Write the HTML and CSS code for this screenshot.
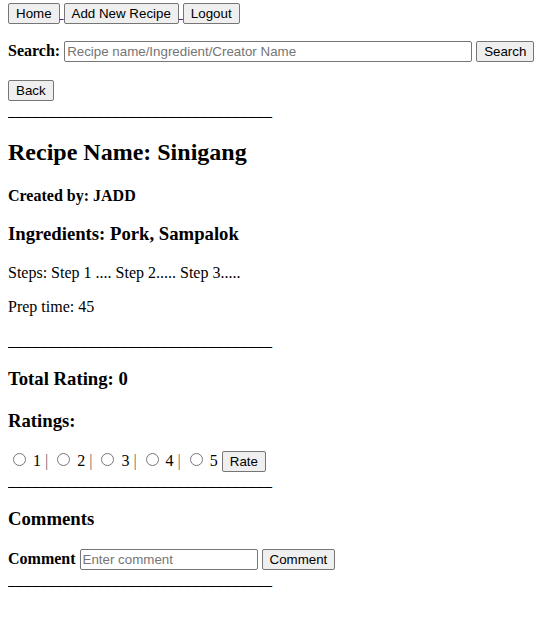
FILE: index.html
```html
<!DOCTYPE html>
<html>
<head>
<meta charset="utf-8">
<link rel="stylesheet" href="styles.css">
</head>
<body>
<div class="nav"><a class="navlink" href="#"><button class="btn">Home</button> </a><a class="navlink" href="#"><button class="btn">Add New Recipe</button> </a><a class="navlink" href="#"><button class="btn">Logout</button></a></div>
<form class="search">
  <p class="row"><b>Search:</b> <input class="field search-field" type="text" placeholder="Recipe name/Ingredient/Creator Name"> <button class="btn" type="button">Search</button></p>
</form>
<div class="back"><button class="btn">Back</button></div>
<p class="rule">_________________________________</p>
<h2 class="title">Recipe Name: Sinigang</h2>
<h4 class="creator">Created by: JADD</h4>
<h3 class="sub ingredients">Ingredients: Pork, Sampalok</h3>
<p class="text">Steps: Step 1 .... Step 2..... Step 3.....</p>
<p class="text">Prep time: 45</p>
<p class="rule">_________________________________</p>
<h3 class="sub total">Total Rating: 0</h3>
<h3 class="sub">Ratings:</h3>
<div class="ratings"><label class="opt"><input class="radio" type="radio" name="r"> 1 </label><span class="sep">|</span> <label class="opt"><input class="radio" type="radio" name="r"> 2 </label><span class="sep">|</span> <label class="opt"><input class="radio" type="radio" name="r"> 3 </label><span class="sep">|</span> <label class="opt"><input class="radio" type="radio" name="r"> 4 </label><span class="sep">|</span> <label class="opt"><input class="radio" type="radio" name="r"> 5</label> <button class="btn">Rate</button></div>
<p class="rule">_________________________________</p>
<h3 class="sub comments">Comments</h3>
<div class="comment"><b>Comment</b> <input class="field comment-field" type="text" placeholder="Enter comment"> <button class="btn">Comment</button></div>
<p class="rule rule-last">_________________________________</p>
</body>
</html>
```

FILE: styles.css
```css
html, body {
  background: #fff;
}
body {
  margin: 3px 8px 8px 8px;
  font-family: "Liberation Serif", "Times New Roman", serif;
  font-size: 16px;
  color: #000;
}
.btn {
  font-family: "Liberation Sans", Arial, sans-serif;
  font-size: 13.333px;
  line-height: 15px;
  padding: 2px 7px;
  margin: 0;
  border: 1px solid #767676;
  border-radius: 2px;
  background: #efefef;
  color: #000;
}
.navlink {
  color: #551a8b;
  text-decoration: underline;
}
.search {
  margin: 0;
}
.row {
  margin: 17px 0 18px;
}
.field {
  font-family: "Liberation Sans", Arial, sans-serif;
  font-size: 13.333px;
  line-height: 15px;
  padding: 1px 2px;
  margin: 0;
  border: 1px solid #767676;
  border-radius: 2px;
  height: 21px;
  box-sizing: border-box;
  vertical-align: baseline;
}
.field::placeholder {
  color: #757575;
}
.search-field {
  width: 408px;
}
.comment-field {
  width: 178px;
}
.back {
  margin: 0 0 1px;
}
.rule {
  margin: 0;
  line-height: 18px;
}
.title {
  font-size: 24px;
  margin: 19px 0 20px;
}
.creator {
  font-size: 16px;
  margin: 21px 0 18px;
}
.sub {
  font-size: 18.72px;
  margin: 18px 0;
}
.ingredients {
  margin-bottom: 19px;
}
.total {
  margin-bottom: 20px;
}
.text {
  margin: 16px 0;
}
.ratings {
  margin: 0;
}
.radio {
  margin: 3px 3px 0 5px;
}
.sep {
  color: #666;
}
.comments {
  margin-bottom: 19px;
}
.comment {
  margin: 0 0 1px;
}
```
